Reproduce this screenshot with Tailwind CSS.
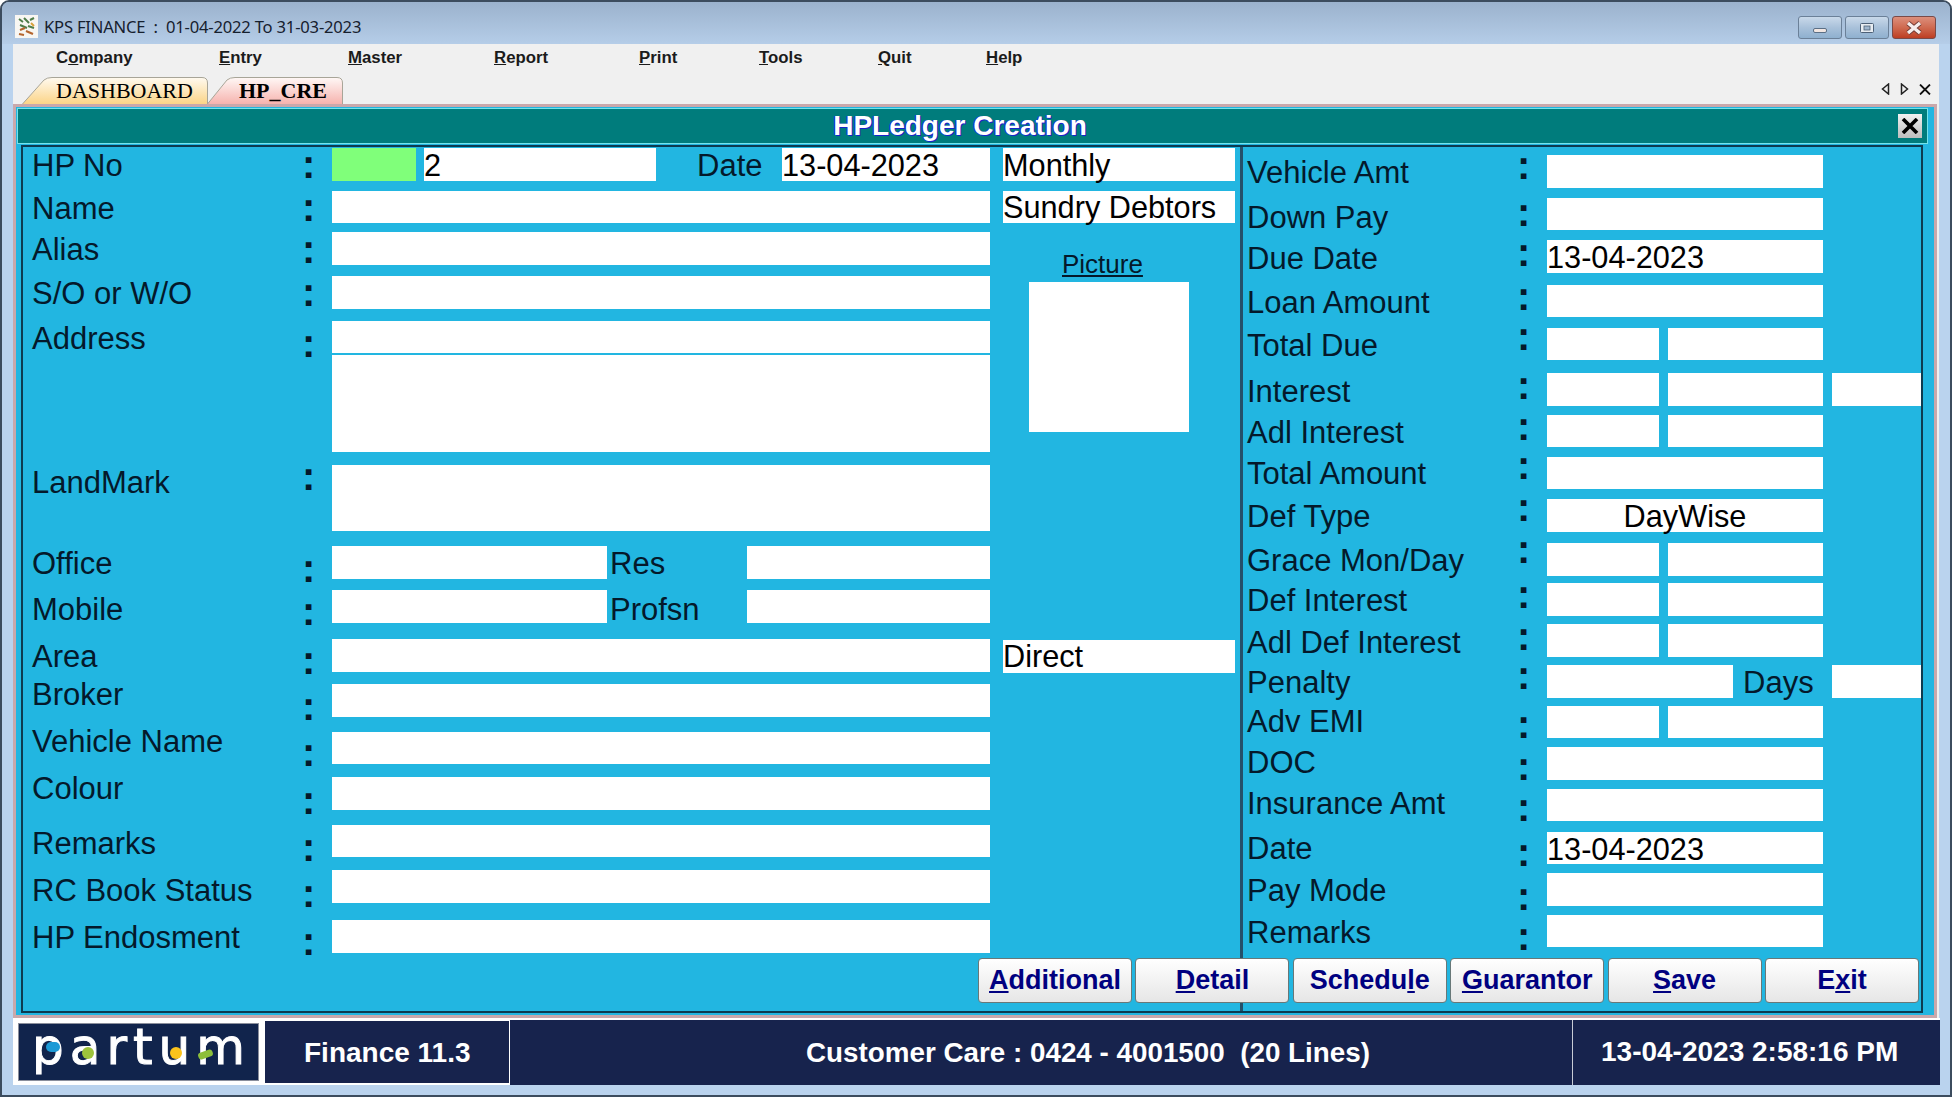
<!DOCTYPE html>
<html lang="en">
<head>
  <meta charset="UTF-8">
  <title>KPS FINANCE</title>
  <script src="https://cdn.jsdelivr.net/npm/@tailwindcss/browser@4"></script>
</head>
<body class="bg-white overflow-hidden font-['Liberation_Sans',Arial,sans-serif]">
<div class="w-[1952px] h-[1097px] flex flex-col rounded-t-[9px] border-2 border-[#3c4c5e] bg-[#bad3ee] overflow-hidden">

  <!-- Title bar -->
  <div class="h-[42px] shrink-0 flex items-center bg-linear-to-b from-[#9bb2cd] to-[#b5cde8] pl-[13px] pr-[14px]">
    <svg class="w-[23px] h-[23px] shrink-0 mt-[6px]" viewBox="0 0 23 23">
      <rect width="23" height="23" fill="#f8f6f2"/>
      <path d="M4 4l4 3M9 3l5 5M15 5l4-2M5 10l7 3M13 11l6 2" stroke="#4f7d4a" stroke-width="2"/>
      <path d="M5 15l5-2M11 16l7 3M4 19l5 1" stroke="#b5652e" stroke-width="2.2"/>
      <path d="M16 8l3 3" stroke="#d8a03a" stroke-width="2"/>
    </svg>
    <span class="ml-[6px] mt-[9px] text-[16.6px] tracking-[-0.2px] whitespace-pre text-[#16202e] font-['Noto_Sans',sans-serif]">KPS FINANCE  :  01-04-2022 To 31-03-2023</span>
    <div class="ml-auto flex gap-[3px] mt-[9px]">
      <div class="w-[44px] h-[23px] rounded-[3px] border border-[#6b8098] bg-linear-to-b from-[#c9d9ea] via-[#a9c1da] to-[#8fb0cf] flex items-center justify-center">
        <div class="w-[14px] h-[5px] mt-[5px] rounded-[2px] bg-[#f1e6e2] border border-[#5b6f85]"></div>
      </div>
      <div class="w-[44px] h-[23px] rounded-[3px] border border-[#6b8098] bg-linear-to-b from-[#c9d9ea] via-[#a9c1da] to-[#8fb0cf] flex items-center justify-center">
        <svg class="w-[16px] h-[12px]" viewBox="0 0 16 12"><rect x="1.5" y="1.5" width="13" height="9" rx="1" fill="#e8edf2" stroke="#4d6077"/><rect x="5" y="4" width="6" height="4" fill="#9fb6ce" stroke="#4d6077" stroke-width=".8"/></svg>
      </div>
      <div class="w-[44px] h-[23px] rounded-[3px] border border-[#7a4a48] bg-linear-to-b from-[#dc8f7c] via-[#cf6a50] to-[#bd3d22] flex items-center justify-center">
        <svg class="w-[18px] h-[14px]" viewBox="0 0 18 14"><path d="M3 2l12 10M15 2L3 12" stroke="#6e3a34" stroke-width="5"/><path d="M3 2l12 10M15 2L3 12" stroke="#f6eeee" stroke-width="3.4"/></svg>
      </div>
    </div>
  </div>

  <!-- Client area -->
  <div class="ml-[11px] w-[1926px] bg-[#f0f0f0] flex flex-col">
    <!-- Menu -->
    <div class="h-[31px] flex items-center pb-[4px] pl-[43px] font-bold text-[16.8px] text-[#1b1b1b]">
      <span class="w-[163px]">C<u>o</u>mpany</span>
      <span class="w-[129px]"><u>E</u>ntry</span>
      <span class="w-[146px]"><u>M</u>aster</span>
      <span class="w-[145px]"><u>R</u>eport</span>
      <span class="w-[120px]"><u>P</u>rint</span>
      <span class="w-[119px]"><u>T</u>ools</span>
      <span class="w-[108px]"><u>Q</u>uit</span>
      <span><u>H</u>elp</span>
    </div>
    <!-- Tabs -->
    <div class="h-[29px] flex items-end pl-[9px] font-['Liberation_Serif',serif] text-[22px] text-black">
      <div class="relative w-[186px] h-[27px]">
        <svg class="absolute inset-0" width="186" height="27" viewBox="0 0 186 27">
          <defs><linearGradient id="tabA" x1="0" y1="0" x2="0" y2="1"><stop offset="0" stop-color="#fffaf0"/><stop offset="1" stop-color="#fbd487"/></linearGradient></defs>
          <path d="M.5 27L22 3Q25 .5 30 .5H180Q185.500 .5 185.500 6V27" fill="url(#tabA)" stroke="#a8a598"/>
        </svg>
        <div class="relative pl-[34px] leading-[27px]">DASHBOARD</div>
      </div>
      <div class="relative w-[136px] h-[27px] ml-[-1px]">
        <svg class="absolute inset-0" width="136" height="27" viewBox="0 0 136 27">
          <defs><linearGradient id="tabB" x1="0" y1="0" x2="0" y2="1"><stop offset="0" stop-color="#fff8f6"/><stop offset="1" stop-color="#f6b3ae"/></linearGradient></defs>
          <path d="M.5 27L20 3Q23 .5 28 .5H130Q135.500 .5 135.500 6V27" fill="url(#tabB)" stroke="#a8a598"/>
        </svg>
        <div class="relative pl-[32px] leading-[27px] font-bold">HP_CRE</div>
      </div>
      <div class="ml-auto flex items-center gap-[10px] mr-[8px] mb-[9px]">
        <svg width="9" height="12" viewBox="0 0 9 12"><path d="M7.500 1L1.500 6l6 5z" fill="none" stroke="#222" stroke-width="1.500"/></svg>
        <svg width="9" height="12" viewBox="0 0 9 12"><path d="M1.500 1l6 5-6 5z" fill="none" stroke="#222" stroke-width="1.500"/></svg>
        <svg width="12" height="11" viewBox="0 0 12 11"><path d="M1 .5l10 10M11 .5l-10 10" stroke="#111" stroke-width="1.800"/></svg>
      </div>
    </div>

    <!-- Form area -->
    <div class="w-[1924px] h-[914px] border-[3px] border-[#c9a8ab] bg-[#22b6e1] text-[31px] text-[#04192b]">
      <!-- Caption -->
      <div class="relative mt-[1px] ml-[1px] w-[1911px] h-[36px] border border-[#74e3ea] bg-[#007c7c] flex items-center justify-center pr-[25px]">
        <span class="text-[28px] font-bold text-white [text-shadow:1px_1px_0_#1a22cc,-1px_0_0_#1a22cc]">HPLedger Creation</span>
        <div class="absolute right-[5px] top-[5px] w-[24px] h-[24px] bg-linear-to-b from-[#f2f2f2] to-[#bdbdbd] flex items-center justify-center">
          <svg width="18" height="16" viewBox="0 0 18 16"><path d="M2 1l14 14M16 1L2 15" stroke="#000" stroke-width="3.600"/></svg>
        </div>
      </div>

      <!-- Panel -->
      <div class="relative mt-[1px] ml-[5px] w-[1902px] h-[868px] border-2 border-[#0d3b50] flex">

        <!-- Left column -->
        <div class="w-[967px] pl-[9px] shrink-0">
          <div class="flex h-[33px] mt-[1px]">
            <span class="w-[270px] h-[30px] leading-[30px] mt-[3px]">HP No</span>
            <span class="w-[30px] h-[40px] text-[40px] leading-[40px] font-bold mt-[-4px]">:</span>
            <div class="w-[84px] h-full bg-[#80ff7a]"></div>
            <div class="w-[232px] h-full ml-[8px] bg-white text-[30.7px] leading-[35px] text-black">2</div>
            <span class="w-[85px] h-[30px] ml-[41px] leading-[30px] mt-[3px]">Date</span>
            <div class="w-[208px] h-full bg-white text-[30.7px] leading-[35px] text-black">13-04-2023</div>
          </div>
          <div class="flex h-[32px] mt-[10px]">
            <span class="w-[270px] h-[30px] leading-[30px] mt-[3px]">Name</span>
            <span class="w-[30px] h-[40px] text-[40px] leading-[40px] font-bold mt-[-4px]">:</span>
            <div class="flex-1 bg-white"></div>
          </div>
          <div class="flex h-[33px] mt-[9px]">
            <span class="w-[270px] h-[30px] leading-[30px] mt-[3px]">Alias</span>
            <span class="w-[30px] h-[40px] text-[40px] leading-[40px] font-bold mt-[-3px]">:</span>
            <div class="flex-1 bg-white"></div>
          </div>
          <div class="flex h-[33px] mt-[11px]">
            <span class="w-[270px] h-[30px] leading-[30px] mt-[3px]">S/O or W/O</span>
            <span class="w-[30px] h-[40px] text-[40px] leading-[40px] font-bold mt-[-4px]">:</span>
            <div class="flex-1 bg-white"></div>
          </div>
          <div class="flex h-[32px] mt-[12px]">
            <span class="w-[270px] h-[30px] leading-[30px] mt-[3px]">Address</span>
            <span class="w-[30px] h-[40px] text-[40px] leading-[40px] font-bold mt-[2px]">:</span>
            <div class="flex-1 bg-white"></div>
          </div>
          <div class="ml-[300px] mt-[2px] h-[97px] bg-white"></div>
          <div class="flex h-[66px] mt-[13px]">
            <span class="w-[270px] h-[30px] leading-[30px] mt-[3px]">LandMark</span>
            <span class="w-[30px] h-[40px] text-[40px] leading-[40px] font-bold mt-[-9px]">:</span>
            <div class="flex-1 bg-white"></div>
          </div>
          <div class="flex h-[33px] mt-[15px]">
            <span class="w-[270px] h-[30px] leading-[30px] mt-[3px]">Office</span>
            <span class="w-[30px] h-[40px] text-[40px] leading-[40px] font-bold mt-[2px]">:</span>
            <div class="w-[275px] bg-white"></div>
            <span class="w-[140px] h-[30px] pl-[3px] leading-[30px] mt-[3px]">Res</span>
            <div class="flex-1 bg-white"></div>
          </div>
          <div class="flex h-[33px] mt-[11px]">
            <span class="w-[270px] h-[30px] leading-[30px] mt-[5px]">Mobile</span>
            <span class="w-[30px] h-[40px] text-[40px] leading-[40px] font-bold mt-[1px]">:</span>
            <div class="w-[275px] bg-white"></div>
            <span class="w-[140px] h-[30px] pl-[3px] leading-[30px] mt-[5px]">Profsn</span>
            <div class="flex-1 bg-white"></div>
          </div>
          <div class="flex h-[33px] mt-[16px]">
            <span class="w-[270px] h-[30px] leading-[30px] mt-[3px]">Area</span>
            <span class="w-[30px] h-[40px] text-[40px] leading-[40px] font-bold mt-[1px]">:</span>
            <div class="flex-1 bg-white"></div>
          </div>
          <div class="flex h-[33px] mt-[12px]">
            <span class="w-[270px] h-[30px] leading-[30px] mt-[-4px]">Broker</span>
            <span class="w-[30px] h-[40px] text-[40px] leading-[40px] font-bold mt-[2px]">:</span>
            <div class="flex-1 bg-white"></div>
          </div>
          <div class="flex h-[32px] mt-[15px]">
            <span class="w-[270px] h-[30px] leading-[30px] mt-[-5px]">Vehicle Name</span>
            <span class="w-[30px] h-[40px] text-[40px] leading-[40px] font-bold mt-[0px]">:</span>
            <div class="flex-1 bg-white"></div>
          </div>
          <div class="flex h-[33px] mt-[13px]">
            <span class="w-[270px] h-[30px] leading-[30px] mt-[-3px]">Colour</span>
            <span class="w-[30px] h-[40px] text-[40px] leading-[40px] font-bold mt-[3px]">:</span>
            <div class="flex-1 bg-white"></div>
          </div>
          <div class="flex h-[32px] mt-[15px]">
            <span class="w-[270px] h-[30px] leading-[30px] mt-[4px]">Remarks</span>
            <span class="w-[30px] h-[40px] text-[40px] leading-[40px] font-bold mt-[2px]">:</span>
            <div class="flex-1 bg-white"></div>
          </div>
          <div class="flex h-[33px] mt-[13px]">
            <span class="w-[270px] h-[30px] leading-[30px] mt-[6px]">RC Book Status</span>
            <span class="w-[30px] h-[40px] text-[40px] leading-[40px] font-bold mt-[3px]">:</span>
            <div class="flex-1 bg-white"></div>
          </div>
          <div class="flex h-[33px] mt-[17px]">
            <span class="w-[270px] h-[30px] leading-[30px] mt-[3px]">HP Endosment</span>
            <span class="w-[30px] h-[40px] text-[40px] leading-[40px] font-bold mt-[1px]">:</span>
            <div class="flex-1 bg-white"></div>
          </div>
        </div>

        <!-- Middle column -->
        <div class="w-[250px] shrink-0 pl-[13px] text-[30.7px] text-black">
          <div class="w-[232px] h-[33px] mt-[1px] bg-white leading-[35px]">Monthly</div>
          <div class="w-[232px] h-[32px] mt-[10px] bg-white leading-[33px]">Sundry Debtors</div>
          <div class="ml-[59px] mt-[28px] h-[26px] text-[26px] leading-[26px] text-[#04192b]"><u>Picture</u></div>
          <div class="ml-[26px] mt-[5px] w-[160px] h-[150px] bg-white"></div>
          <div class="w-[232px] h-[33px] mt-[208px] bg-white leading-[33px]">Direct</div>
        </div>

        <!-- Right column -->
        <div class="flex-1 border-l-[3px] border-[#24506a] pl-[4px]">
          <div class="flex h-[33px] mt-[8px]">
            <span class="w-[270px] h-[30px] leading-[30px] mt-[3px]">Vehicle Amt</span>
            <span class="w-[30px] h-[40px] text-[40px] leading-[40px] font-bold mt-[-10px]">:</span>
            <div class="w-[276px] bg-white"></div>
          </div>
          <div class="flex h-[32px] mt-[10px]">
            <span class="w-[270px] h-[30px] leading-[30px] mt-[5px]">Down Pay</span>
            <span class="w-[30px] h-[40px] text-[40px] leading-[40px] font-bold mt-[-6px]">:</span>
            <div class="w-[276px] bg-white"></div>
          </div>
          <div class="flex h-[33px] mt-[10px]">
            <span class="w-[270px] h-[30px] leading-[30px] mt-[4px]">Due Date</span>
            <span class="w-[30px] h-[40px] text-[40px] leading-[40px] font-bold mt-[-8px]">:</span>
            <div class="w-[276px] bg-white text-[30.7px] leading-[36px] text-black">13-04-2023</div>
          </div>
          <div class="flex h-[32px] mt-[12px]">
            <span class="w-[270px] h-[30px] leading-[30px] mt-[3px]">Loan Amount</span>
            <span class="w-[30px] h-[40px] text-[40px] leading-[40px] font-bold mt-[-9px]">:</span>
            <div class="w-[276px] bg-white"></div>
          </div>
          <div class="flex h-[32px] mt-[11px]">
            <span class="w-[270px] h-[30px] leading-[30px] mt-[3px]">Total Due</span>
            <span class="w-[30px] h-[40px] text-[40px] leading-[40px] font-bold mt-[-12px]">:</span>
            <div class="w-[112px] bg-white"></div>
            <div class="w-[155px] ml-[9px] bg-white"></div>
          </div>
          <div class="flex h-[33px] mt-[13px]">
            <span class="w-[270px] h-[30px] leading-[30px] mt-[4px]">Interest</span>
            <span class="w-[30px] h-[40px] text-[40px] leading-[40px] font-bold mt-[-8px]">:</span>
            <div class="w-[112px] bg-white"></div>
            <div class="w-[155px] ml-[9px] bg-white"></div>
            <div class="w-[89px] ml-[9px] bg-white"></div>
          </div>
          <div class="flex h-[32px] mt-[9px]">
            <span class="w-[270px] h-[30px] leading-[30px] mt-[3px]">Adl Interest</span>
            <span class="w-[30px] h-[40px] text-[40px] leading-[40px] font-bold mt-[-9px]">:</span>
            <div class="w-[112px] bg-white"></div>
            <div class="w-[155px] ml-[9px] bg-white"></div>
          </div>
          <div class="flex h-[32px] mt-[10px]">
            <span class="w-[270px] h-[30px] leading-[30px] mt-[2px]">Total Amount</span>
            <span class="w-[30px] h-[40px] text-[40px] leading-[40px] font-bold mt-[-12px]">:</span>
            <div class="w-[276px] bg-white"></div>
          </div>
          <div class="flex h-[33px] mt-[10px]">
            <span class="w-[270px] h-[30px] leading-[30px] mt-[3px]">Def Type</span>
            <span class="w-[30px] h-[40px] text-[40px] leading-[40px] font-bold mt-[-12px]">:</span>
            <div class="w-[276px] bg-white text-[30.7px] leading-[35px] text-center text-black">DayWise</div>
          </div>
          <div class="flex h-[33px] mt-[11px]">
            <span class="w-[270px] h-[30px] leading-[30px] mt-[3px]">Grace Mon/Day</span>
            <span class="w-[30px] h-[40px] text-[40px] leading-[40px] font-bold mt-[-14px]">:</span>
            <div class="w-[112px] bg-white"></div>
            <div class="w-[155px] ml-[9px] bg-white"></div>
          </div>
          <div class="flex h-[33px] mt-[7px]">
            <span class="w-[270px] h-[30px] leading-[30px] mt-[3px]">Def Interest</span>
            <span class="w-[30px] h-[40px] text-[40px] leading-[40px] font-bold mt-[-9px]">:</span>
            <div class="w-[112px] bg-white"></div>
            <div class="w-[155px] ml-[9px] bg-white"></div>
          </div>
          <div class="flex h-[33px] mt-[8px]">
            <span class="w-[270px] h-[30px] leading-[30px] mt-[4px]">Adl Def Interest</span>
            <span class="w-[30px] h-[40px] text-[40px] leading-[40px] font-bold mt-[-8px]">:</span>
            <div class="w-[112px] bg-white"></div>
            <div class="w-[155px] ml-[9px] bg-white"></div>
          </div>
          <div class="flex h-[33px] mt-[8px]">
            <span class="w-[270px] h-[30px] leading-[30px] mt-[3px]">Penalty</span>
            <span class="w-[30px] h-[40px] text-[40px] leading-[40px] font-bold mt-[-10px]">:</span>
            <div class="w-[186px] bg-white"></div>
            <span class="w-[99px] h-[30px] pl-[10px] leading-[30px] mt-[3px]">Days</span>
            <div class="w-[89px] bg-white"></div>
          </div>
          <div class="flex h-[32px] mt-[8px]">
            <span class="w-[270px] h-[30px] leading-[30px] mt-[1px]">Adv EMI</span>
            <span class="w-[30px] h-[40px] text-[40px] leading-[40px] font-bold mt-[-2px]">:</span>
            <div class="w-[112px] bg-white"></div>
            <div class="w-[155px] ml-[9px] bg-white"></div>
          </div>
          <div class="flex h-[33px] mt-[9px]">
            <span class="w-[270px] h-[30px] leading-[30px] mt-[1px]">DOC</span>
            <span class="w-[30px] h-[40px] text-[40px] leading-[40px] font-bold mt-[-1px]">:</span>
            <div class="w-[276px] bg-white"></div>
          </div>
          <div class="flex h-[32px] mt-[9px]">
            <span class="w-[270px] h-[30px] leading-[30px] mt-[0px]">Insurance Amt</span>
            <span class="w-[30px] h-[40px] text-[40px] leading-[40px] font-bold mt-[-2px]">:</span>
            <div class="w-[276px] bg-white"></div>
          </div>
          <div class="flex h-[32px] mt-[11px]">
            <span class="w-[270px] h-[30px] leading-[30px] mt-[2px]">Date</span>
            <span class="w-[30px] h-[40px] text-[40px] leading-[40px] font-bold mt-[0px]">:</span>
            <div class="w-[276px] bg-white text-[30.7px] leading-[35px] text-black">13-04-2023</div>
          </div>
          <div class="flex h-[33px] mt-[9px]">
            <span class="w-[270px] h-[30px] leading-[30px] mt-[3px]">Pay Mode</span>
            <span class="w-[30px] h-[40px] text-[40px] leading-[40px] font-bold mt-[3px]">:</span>
            <div class="w-[276px] bg-white"></div>
          </div>
          <div class="flex h-[32px] mt-[9px]">
            <span class="w-[270px] h-[30px] leading-[30px] mt-[3px]">Remarks</span>
            <span class="w-[30px] h-[40px] text-[40px] leading-[40px] font-bold mt-[1px]">:</span>
            <div class="w-[276px] bg-white"></div>
          </div>
        </div>

        <!-- Action buttons sit over the column divider -->
        <div class="absolute right-[2px] bottom-[8px] flex gap-[3.4px] text-[27px] font-bold text-[#000080]">
          <div class="w-[154px] h-[45px] rounded-[4px] border border-[#687878] bg-linear-to-b from-white to-[#e6e6e6] flex items-center justify-center"><span><u>A</u>dditional</span></div>
          <div class="w-[154px] h-[45px] rounded-[4px] border border-[#687878] bg-linear-to-b from-white to-[#e6e6e6] flex items-center justify-center"><span><u>D</u>etail</span></div>
          <div class="w-[154px] h-[45px] rounded-[4px] border border-[#687878] bg-linear-to-b from-white to-[#e6e6e6] flex items-center justify-center"><span>Schedu<u>l</u>e</span></div>
          <div class="w-[154px] h-[45px] rounded-[4px] border border-[#687878] bg-linear-to-b from-white to-[#e6e6e6] flex items-center justify-center"><span><u>G</u>uarantor</span></div>
          <div class="w-[154px] h-[45px] rounded-[4px] border border-[#687878] bg-linear-to-b from-white to-[#e6e6e6] flex items-center justify-center"><span><u>S</u>ave</span></div>
          <div class="w-[154px] h-[45px] rounded-[4px] border border-[#687878] bg-linear-to-b from-white to-[#e6e6e6] flex items-center justify-center"><span>E<u>x</u>it</span></div>
        </div>
      </div>
    </div>
  </div>

  <!-- Footer strip -->
  <div class="ml-[11px] w-[1927px] h-[67px] flex bg-white text-[28px] font-bold text-white">
    <div class="relative ml-[5px] mt-[5px] w-[241px] h-[58px] shrink-0 bg-[#11244c] border border-[#8b8f9c]">
      <span class="absolute left-[13px] top-[-2px] text-[50px] leading-[50px] font-normal tracking-[6px] font-['DejaVu_Sans',sans-serif] [-webkit-text-stroke:1px_white]">partum</span>
      <span class="absolute left-[27px] top-[18px] w-[14px] h-[10px] rounded-full bg-[#1d9ad6]"></span>
      <span class="absolute left-[63px] top-[23px] w-[12px] h-[12px] rounded-full bg-[#9dc33b]"></span>
      <span class="absolute left-[151px] top-[23px] w-[12px] h-[12px] rounded-full bg-[#fbc31c]"></span>
      <span class="absolute left-[179px] top-[27px] w-[15px] h-[7px] rounded-[3px] -rotate-20 bg-[#8dbf3a]"></span>
    </div>
    <div class="ml-[6px] mt-[3px] w-[245px] h-[62px] shrink-0 bg-[#17234d] border-r-[1px] border-white pl-[39px] leading-[64px]">Finance 11.3</div>
    <div class="w-[1063px] h-[65px] mt-[2px] shrink-0 bg-[#17234d] border-r-[1px] border-[#c8ccd6] pl-[296px] text-[27.8px] leading-[65px] whitespace-pre">Customer Care : 0424 - 4001500  (20 Lines)</div>
    <div class="flex-1 h-[65px] mt-[2px] bg-[#17234d] pl-[28px] leading-[64px] whitespace-pre">13-04-2023 2:58:16 PM</div>
  </div>
</div>
</body>
</html>
